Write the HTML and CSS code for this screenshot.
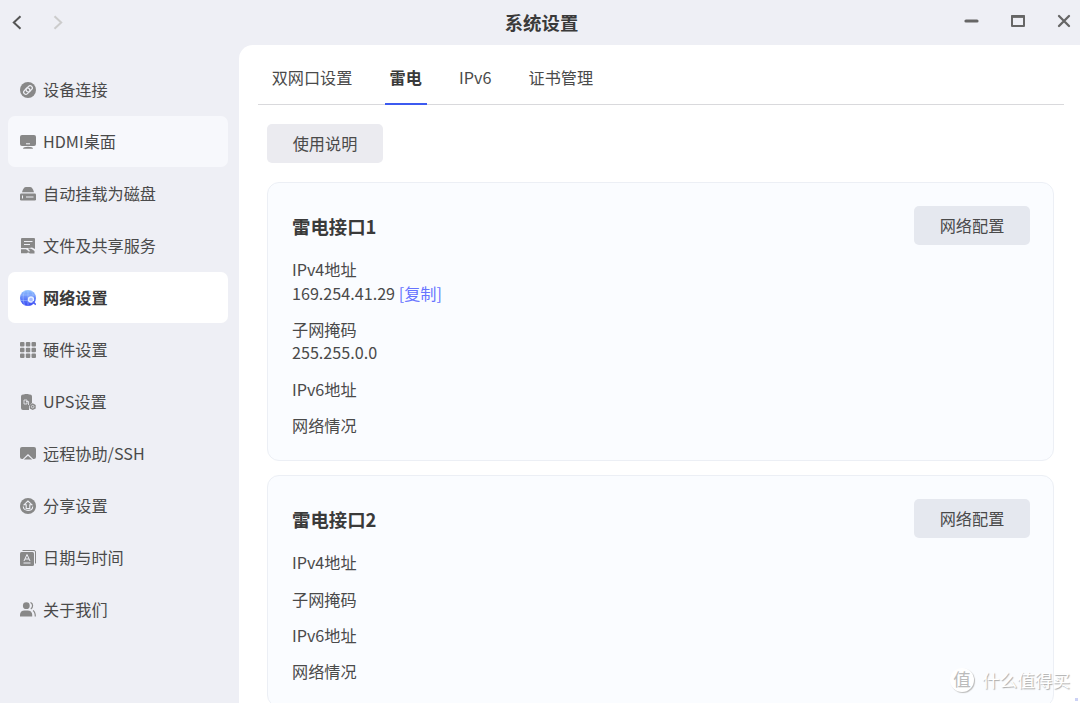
FILE: index.html
```
<!DOCTYPE html>
<html lang="zh-CN">

<head>
    <meta charset="UTF-8" />
    <meta name="viewport" content="width=device-width, initial-scale=1.0" />
    <title>系统设置</title>
    <link rel="stylesheet" href="styles.css">
</head>

<body>
    <header class="titlebar">
        <div class="nav">
            <svg width="12" height="16" viewBox="0 0 12 16"><path d="M9.5 1.2L2.8 7.5l6.7 6.3" fill="none" stroke="#555" stroke-width="2" /></svg>
            <svg width="12" height="16" viewBox="0 0 12 16"><path d="M2.5 1.2l6.7 6.3-6.7 6.3" fill="none" stroke="#ccc" stroke-width="2" /></svg>
        </div>
        <h1 class="title">系统设置</h1>
        <div class="controls">
            <svg width="16" height="16" viewBox="0 0 16 16"><path d="M2 8h11" stroke="#666" stroke-width="3.2" stroke-linecap="round" /></svg>
            <svg width="16" height="16" viewBox="0 0 16 16"><path d="M2 3h12v10H2z" fill="none" stroke="#666" stroke-width="2" stroke-linejoin="round" /><path d="M1.5 3.5h13" stroke="#666" stroke-width="2.8" /></svg>
            <svg width="16" height="16" viewBox="0 0 16 16"><path d="M3 3l10 10M13 3L3 13" stroke="#666" stroke-width="2.3" stroke-linecap="round" /></svg>
        </div>
    </header>

    <div class="main">
        <nav class="sidebar">
            <a class="item">
                <svg class="icon" viewBox="0 0 16 16"><circle cx="8" cy="8" r="8" fill="#888" /><g fill="none" stroke="#eeeff5" stroke-width="1.2" transform="rotate(-45 8 8)"><rect x="2.8" y="5.8" width="7" height="4.4" rx="2.2" /><rect x="6.2" y="5.8" width="7" height="4.4" rx="2.2" /></g></svg>
                <span>设备连接</span>
            </a>
            <a class="item hover">
                <svg class="icon" viewBox="0 0 16 16"><rect y="1" width="16" height="11" rx="2" fill="#888" /><path d="M3 14.7c0-1.2 2-1.9 5-1.9s5 .7 5 1.9z" fill="#888" /><path d="M6 9.8h4" stroke="#f7f8fc" /></svg>
                <span>HDMI桌面</span>
            </a>
            <a class="item">
                <svg class="icon" viewBox="0 0 16 16"><path d="M2 6.3C3 3 4 1 6 1h4c2 0 3 2 4 5.3z" fill="#888" /><rect y="7.5" width="16" height="7" rx="1.3" fill="#888" /><path d="M2.5 9.5v3M6 11h7.5" stroke="#eeeff5" /></svg>
                <span>自动挂载为磁盘</span>
            </a>
            <a class="item">
                <svg class="icon" viewBox="0 0 16 16"><path d="M2 0h12a1 1 0 0 1 1 1v10l-3-1.5-3 .5H1V1a1 1 0 0 1 1-1z" fill="#888" /><path d="M4 3.5h8.5M4 6.5h6" stroke="#eeeff5" stroke-width="1.2" /><path d="M1 11.3h5l3 2.2-2 1.7H1zM8 10.8c3-.8 4 .7 6.5 2.2v2.5H10l-2-1 2-1.5z" fill="#888" /></svg>
                <span>文件及共享服务</span>
            </a>
            <a class="item active">
                <svg class="icon" viewBox="0 0 16 16">
                    <defs><linearGradient id="globe" x1="0" y1="0" x2="0" y2="1"><stop offset="0" stop-color="#8fc3ff" /><stop offset="1" stop-color="#3848f4" /></linearGradient></defs>
                    <circle cx="8" cy="8" r="8" fill="url(#globe)" />
                    <path d="M1 5h14M0 10.5h13M8 0v16M5 .6C2.5 5 2.5 11 5 15.4M11 .6c1.5 2 2.2 4 2.3 6" fill="none" stroke="#b7d4ff" stroke-width=".7" opacity=".6" />
                    <circle cx="11" cy="9.5" r="2.5" fill="#a9bcff" stroke="#e8f0ff" stroke-width="1.3" /><path d="M12.8 11.5l3 3.3" stroke="#4d60f4" stroke-width="1.6" />
                </svg>
                <span>网络设置</span>
            </a>
            <a class="item">
                <svg class="icon" viewBox="0 0 16 16" fill="#888"><rect width="4.5" height="4.5" rx="1" /><rect x="5.8" width="4.5" height="4.5" rx="1" /><rect x="11.5" width="4.5" height="4.5" rx="1" /><rect y="5.8" width="4.5" height="4.5" rx="1" /><rect x="5.8" y="5.8" width="4.5" height="4.5" rx="1" /><rect x="11.5" y="5.8" width="4.5" height="4.5" rx="1" /><rect y="11.5" width="4.5" height="4.5" rx="1" /><rect x="5.8" y="11.5" width="4.5" height="4.5" rx="1" /><rect x="11.5" y="11.5" width="4.5" height="4.5" rx="1" /></svg>
                <span>硬件设置</span>
            </a>
            <a class="item">
                <svg class="icon" viewBox="0 0 16 16"><path d="M3 .6h1L5 0h3l1 .6h1a2 2 0 0 1 2 2V9l-3 3v4H3a2 2 0 0 1-2-2V2.6a2 2 0 0 1 2-2z" fill="#888" /><path d="M4 6h3v4H4zM6 7.5h2.5v3.5" fill="none" stroke="#eeeff5" stroke-width=".8" /><path d="M12.7 9.3l3 1.7v3.4l-3 1.6-3-1.6V11z" fill="#888" /><circle cx="12.7" cy="12.7" r="1.3" fill="none" stroke="#eeeff5" stroke-width=".7" /></svg>
                <span>UPS设置</span>
            </a>
            <a class="item">
                <svg class="icon" viewBox="0 0 16 16"><path d="M2 1h12a2 2 0 0 1 2 2v8a2 2 0 0 1-2 2h-.8L8 8l-5.200 5H2a2 2 0 0 1-2-2V3a2 2 0 0 1 2-2z" fill="#888" /><path d="M8 9.8l4.2 3.700H3.800z" fill="#888" /></svg>
                <span>远程协助/SSH</span>
            </a>
            <a class="item">
                <svg class="icon" viewBox="0 0 16 16"><circle cx="8" cy="8" r="8" fill="#888" /><path d="M8 3L4.2 6.7h2v3.8h3.6V6.7h2zM3.3 8.5c0 5.2 9.4 5.2 9.4 0" fill="none" stroke="#eeeff5" stroke-width="1.1" /></svg>
                <span>分享设置</span>
            </a>
            <a class="item">
                <svg class="icon" viewBox="0 0 16 16"><path d="M2.5.5H14A1.5 1.5 0 0 1 15.5 2v11.5" fill="none" stroke="#888" /><rect y="2" width="14" height="14" rx="1.5" fill="#888" /><path d="M4 11l3-6.5L10 11M5 9h4M3.5 13h7" fill="none" stroke="#eeeff5" /></svg>
                <span>日期与时间</span>
            </a>
            <a class="item">
                <svg class="icon" viewBox="0 0 16 16"><circle cx="6.3" cy="3.7" r="3.4" fill="#888" /><path d="M0 14.5v-1.7C0 10 2 8.5 4.5 8.5h3.2c2.5 0 4.500 1.500 4.500 4.300v1.700z" fill="#888" /><path d="M10.500.5c2.700 1 2.700 5.200.3 6.400M13 8.500c1.700 1 2.300 3 2.300 6" fill="none" stroke="#888" stroke-width="1.2" /></svg>
                <span>关于我们</span>
            </a>
        </nav>

        <section class="content">
            <div class="tabs">
                <a class="tab">双网口设置</a>
                <a class="tab selected">雷电</a>
                <a class="tab">IPv6</a>
                <a class="tab">证书管理</a>
            </div>

            <button class="btn help">使用说明</button>

            <div class="card">
                <div class="card-head">
                    <h2>雷电接口1</h2>
                    <button class="btn config">网络配置</button>
                </div>
                <div class="row">IPv4地址<br>169.254.41.29 <a class="copy">[复制]</a></div>
                <div class="row">子网掩码<br>255.255.0.0</div>
                <div class="row">IPv6地址</div>
                <div class="row">网络情况</div>
            </div>

            <div class="card">
                <div class="card-head">
                    <h2>雷电接口2</h2>
                    <button class="btn config">网络配置</button>
                </div>
                <div class="row">IPv4地址</div>
                <div class="row">子网掩码</div>
                <div class="row">IPv6地址</div>
                <div class="row">网络情况</div>
            </div>
        </section>
    </div>

    <div class="watermark"><span class="logo">值</span>什么值得买</div>
    <i class="grip"></i>
</body>

</html>
```
FILE: styles.css
```
* {
    box-sizing: border-box;
}

body {
    margin: 0;
    height: 100vh;
    display: flex;
    flex-direction: column;
    background: #eeeff5;
    color: #4a4a4a;
    font-family: "Noto Sans CJK SC", sans-serif;
    font-size: 16.15px;
    overflow: hidden;
}

svg {
    display: block;
}

.titlebar {
    height: 45px;
    flex: none;
    display: grid;
    grid-template-columns: 1fr auto 1fr;
    align-items: center;
    padding: 0 8px 0 11px;
}

.nav {
    display: flex;
    gap: 29px;
}

.title {
    margin: 0;
    padding-bottom: 2px;
    font-size: 18.4px;
    font-weight: 700;
    color: #3a3a3a;
}

.controls {
    display: flex;
    justify-content: flex-end;
    gap: 30px;
    padding-bottom: 3px;
}

.main {
    flex: 1;
    min-height: 0;
    display: flex;
}

.sidebar {
    width: 239px;
    flex: none;
    padding: 19px 11px 0 8px;
}

.item {
    display: flex;
    align-items: center;
    height: 51px;
    margin-bottom: 1px;
    padding-left: 12px;
    border-radius: 7px;
}

.item span {
    padding-bottom: 2px;
}

.item.hover {
    background: #f7f8fc;
}

.item.active {
    background: #fff;
    color: #3a3a3a;
    font-weight: 700;
}

.icon {
    width: 16px;
    height: 16px;
    margin-right: 7px;
}

.content {
    flex: 1;
    background: #fff;
    border-top-left-radius: 14px;
    overflow: hidden;
}

.tabs {
    display: flex;
    gap: 27.8px;
    height: 60px;
    margin: 0 16px 0 19px;
    padding-left: 9px;
    border-bottom: 1px solid #d9d9dc;
}

.tab {
    height: 60px;
    padding: 0 4.7px;
    line-height: 64px;
}

.tab.selected {
    color: #3a3a3a;
    font-weight: 700;
    border-bottom: 2px solid #3c5af0;
}

.btn {
    display: block;
    width: 116px;
    height: 39px;
    padding: 0 0 2px;
    border: 0;
    border-radius: 5px;
    font: inherit;
    color: #4a4a4a;
}

.help {
    margin: 19px 0 19px 28px;
    background: #ebebf0;
}

.config {
    background: #e5e8ef;
}

.card {
    margin: 0 26px 14px 28px;
    padding: 23px 23px 22.5px 24px;
    border: 1px solid #eceff5;
    border-radius: 12px;
    background: #fafcff;
}

.card-head {
    display: flex;
    justify-content: space-between;
    align-items: center;
    margin-bottom: 13px;
}

.card-head h2 {
    margin: 0;
    font-size: 18.4px;
    font-weight: 700;
    color: #3a3a3a;
}

.row {
    line-height: 23.5px;
    margin-bottom: 12.9px;
}

.row:last-child {
    margin-bottom: 0;
}

.copy {
    color: #6673ff;
}

.watermark {
    position: absolute;
    right: 10px;
    bottom: 10px;
    display: flex;
    align-items: center;
    gap: 8px;
    font-size: 17.6px;
    line-height: 26px;
    color: #fff;
    text-shadow: 1px 1px 1px #aaa;
}

.logo {
    width: 24px;
    height: 24px;
    line-height: 22px;
    text-align: center;
    border-radius: 50%;
    background: #fff;
    color: #bbb;
    text-shadow: none;
    box-shadow: 1px 1px 1px #bbb;
}

.grip {
    position: absolute;
    right: 2px;
    bottom: 2px;
    width: 3px;
    height: 3px;
    background: #ccd2f5;
}
```
